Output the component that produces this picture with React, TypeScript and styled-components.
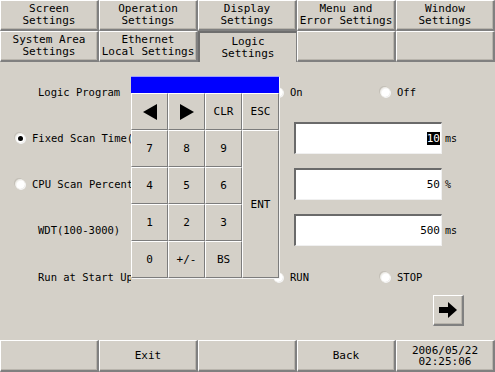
import React from "react";
import styled, { createGlobalStyle, css } from "styled-components";

const Global = createGlobalStyle`
  html, body { margin: 0; padding: 0; background: #d4d0c8; }
  body { font-family: "DejaVu Sans Mono", "Liberation Mono", monospace; font-size: 10.5px; color: #000; }
`;

const Screen = styled.div`
  width: 495px;
  height: 372px;
  display: flex;
  flex-direction: column;
  background: #d4d0c8;
  overflow: hidden;
`;

const raised = css`
  border-style: solid;
  border-width: 1px 2px 2px 1px;
  border-color: #ffffff #808080 #808080 #ffffff;
  box-shadow: inset -1px -1px 0 #b8b4ac;
`;

const TabGrid = styled.div`
  display: grid;
  grid-template-columns: repeat(5, 99px);
  grid-auto-rows: 31px;
`;

const Tab = styled.div<{ $active?: boolean }>`
  box-sizing: border-box;
  display: flex;
  align-items: center;
  justify-content: center;
  text-align: center;
  line-height: 12px;
  white-space: pre;
  font-size: 11px;
  ${raised}
  ${(p) =>
    p.$active &&
    css`
      border-width: 2px 1px 0 2px;
      border-color: #6e6e6e #808080 transparent #6e6e6e;
      box-shadow: none;
    `}
`;

const Content = styled.div`
  position: relative;
  flex: 1;
  display: flex;
  flex-direction: column;
  padding-top: 7px;
`;

const Row = styled.div<{ $h: number; $pt?: number }>`
  height: ${(p) => p.$h}px;
  box-sizing: border-box;
  padding-top: ${(p) => p.$pt ?? 0}px;
  display: grid;
  grid-template-columns: 273px 1fr;
  align-items: center;
`;

const Left = styled.div<{ $radio?: boolean }>`
  box-sizing: border-box;
  max-width: 131px;
  display: flex;
  align-items: center;
  gap: 7px;
  padding-left: ${(p) => (p.$radio ? 15 : 38)}px;
  white-space: nowrap;
  overflow: hidden;
`;

const Right = styled.div`
  display: flex;
  align-items: center;
`;

const Option = styled.div<{ $w?: number }>`
  display: flex;
  align-items: center;
  gap: 7px;
  width: ${(p) => p.$w ?? 100}px;
`;

const Radio = styled.span<{ $on?: boolean }>`
  box-sizing: border-box;
  width: 10px;
  height: 10px;
  border-radius: 50%;
  background: radial-gradient(circle at 60% 60%, #ffffff 45%, #e4e2dc 75%, #b0aca4 100%);
  box-shadow: -1px -1px 0 #c4c0b8, 1px 1px 0 #f4f4f4;
  display: flex;
  align-items: center;
  justify-content: center;
  flex: none;
  &::after {
    content: "";
    display: ${(p) => (p.$on ? "block" : "none")};
    width: 5px;
    height: 5px;
    border-radius: 50%;
    background: #000;
  }
`;

const Field = styled.div`
  box-sizing: border-box;
  width: 148px;
  height: 32px;
  margin-left: 21px;
  background: #fff;
  border-style: solid;
  border-width: 2px 1px 1px 2px;
  border-color: #6a6a6a #f0f0f0 #f0f0f0 #6a6a6a;
  display: flex;
  align-items: center;
  justify-content: flex-end;
  padding-right: 1px;
  font-size: 11px;
`;

const Sel = styled.span`
  background: #000;
  color: #fff;
`;

const Unit = styled.span`
  margin-left: 3px;
  font-size: 10px;
`;

const ArrowRow = styled.div`
  display: flex;
  justify-content: flex-end;
  padding-right: 31px;
  margin-top: 1px;
`;

const SquareButton = styled.div`
  box-sizing: border-box;
  width: 31px;
  height: 31px;
  ${raised}
  display: flex;
  align-items: center;
  justify-content: center;
`;

const Keypad = styled.div`
  position: absolute;
  left: 131px;
  top: 14px;
  width: 148px;
  display: flex;
  flex-direction: column;
  box-shadow: 1px 1px 0 #f4f4f4;
`;

const TitleBar = styled.div`
  height: 17px;
  background: #0000ff;
  border-top: 1px solid #a0a0ff;
  box-sizing: border-box;
`;

const KeyGrid = styled.div`
  display: grid;
  grid-template-columns: repeat(4, 37px);
  grid-template-rows: repeat(5, 37px);
`;

const Key = styled.div<{ $tall?: boolean }>`
  box-sizing: border-box;
  display: flex;
  align-items: center;
  justify-content: center;
  font-size: 11px;
  background: #d4d0c8;
  border-style: solid;
  border-width: 1px;
  border-color: #ffffff #7c7c7c #7c7c7c #ffffff;
  ${(p) =>
    p.$tall &&
    css`
      grid-column: 4;
      grid-row: 2 / span 4;
    `}
`;

const BottomBar = styled.div`
  display: grid;
  grid-template-columns: repeat(5, 99px);
  height: 32px;
`;

const BarButton = styled.div`
  box-sizing: border-box;
  ${raised}
  display: flex;
  align-items: center;
  justify-content: center;
  text-align: center;
  line-height: 11px;
  font-size: 11px;
  white-space: pre;
`;

const Tri = ({ dir }: { dir: "l" | "r" }) => (
  <svg width="14" height="16" viewBox="0 0 14 16">
    <polygon points={dir === "l" ? "14,0 14,16 0,8" : "0,0 0,16 14,8"} fill="#000" />
  </svg>
);

const tabs: [string, boolean][] = [
  ["Screen\nSettings", false],
  ["Operation\nSettings", false],
  ["Display\nSettings", false],
  ["Menu and\nError Settings", false],
  ["Window\nSettings", false],
  ["System Area\nSettings", false],
  ["Ethernet\nLocal Settings", false],
  ["Logic\nSettings", true],
  ["", false],
  ["", false],
];

const keys = ["◀", "▶", "CLR", "ESC", "7", "8", "9", "ENT", "4", "5", "6", "1", "2", "3", "0", "+/-", "BS"];

export default function App() {
  return (
    <Screen>
      <Global />
      <TabGrid>
        {tabs.map(([t, a], i) => (
          <Tab key={i} $active={a}>
            {t}
          </Tab>
        ))}
      </TabGrid>
      <Content>
        <Row $h={46}>
          <Left>Logic Program</Left>
          <Right>
            <Option $w={107}>
              <Radio />
              On
            </Option>
            <Option>
              <Radio />
              Off
            </Option>
          </Right>
        </Row>
        <Row $h={46}>
          <Left $radio>
            <Radio $on />
            Fixed Scan Time(
          </Left>
          <Right>
            <Field>
              <Sel>10</Sel>
            </Field>
            <Unit>ms</Unit>
          </Right>
        </Row>
        <Row $h={46}>
          <Left $radio>
            <Radio />
            CPU Scan Percent
          </Left>
          <Right>
            <Field>50</Field>
            <Unit>%</Unit>
          </Right>
        </Row>
        <Row $h={46}>
          <Left>WDT(100-3000)</Left>
          <Right>
            <Field>500</Field>
            <Unit>ms</Unit>
          </Right>
        </Row>
        <Row $h={41} $pt={6}>
          <Left>Run at Start Up</Left>
          <Right>
            <Option $w={107}>
              <Radio />
              RUN
            </Option>
            <Option>
              <Radio />
              STOP
            </Option>
          </Right>
        </Row>
        <ArrowRow>
          <SquareButton>
            <svg width="18" height="16" viewBox="0 0 18 16">
              <polygon points="0,5 9,5 9,0 18,8 9,16 9,11 0,11" fill="#000" />
            </svg>
          </SquareButton>
        </ArrowRow>
        <Keypad>
          <TitleBar />
          <KeyGrid>
            {keys.map((k) => (
              <Key key={k} $tall={k === "ENT"}>
                {k === "◀" ? <Tri dir="l" /> : k === "▶" ? <Tri dir="r" /> : k}
              </Key>
            ))}
          </KeyGrid>
        </Keypad>
      </Content>
      <BottomBar>
        <BarButton />
        <BarButton>Exit</BarButton>
        <BarButton />
        <BarButton>Back</BarButton>
        <BarButton>{"2006/05/22\n02:25:06"}</BarButton>
      </BottomBar>
    </Screen>
  );
}
